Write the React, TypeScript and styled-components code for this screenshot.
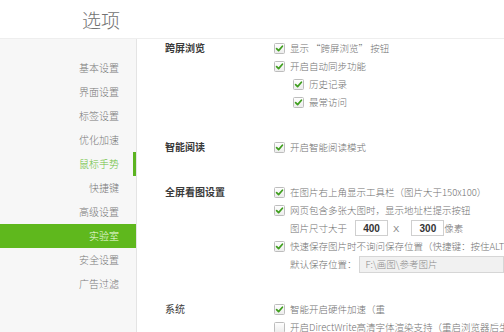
import React from "react";
import styled, { createGlobalStyle } from "styled-components";

const GlobalStyle = createGlobalStyle`
  html, body {
    margin: 0;
    padding: 0;
    background: #ffffff;
    overflow: hidden;
  }
  body {
    font-family: "Noto Sans CJK SC", "Noto Sans", sans-serif;
  }
`;

const menuItems = [
  "基本设置",
  "界面设置",
  "标签设置",
  "优化加速",
  "鼠标手势",
  "快捷键",
  "高级设置",
  "实验室",
  "安全设置",
  "广告过滤",
];

const HOVER_ITEM = "鼠标手势";
const SELECTED_ITEM = "实验室";

const CheckBox = ({ checked = true }: { checked?: boolean }) => (
  <Box width="11" height="11" viewBox="0 0 11 11">
    <defs>
      <linearGradient id="cbg" x1="0" y1="0" x2="0" y2="1">
        <stop offset="0" stopColor="#ffffff" />
        <stop offset="1" stopColor="#ececec" />
      </linearGradient>
    </defs>
    <rect
      x="0.5"
      y="0.5"
      width="10"
      height="10"
      rx="1"
      fill="url(#cbg)"
      stroke="#bdbdbd"
    />
    {checked && (
      <path
        d="M2.6 5.6 L4.6 7.6 L8.4 3.2"
        fill="none"
        stroke="#3f9e1e"
        strokeWidth="1.7"
        strokeLinecap="round"
        strokeLinejoin="round"
      />
    )}
  </Box>
);

const App = () => {
  return (
    <Page>
      <GlobalStyle />
      <Header>
        <TitleCell>
          <Title>选项</Title>
        </TitleCell>
      </Header>
      <Body>
        <Sidebar>
          {menuItems.map((item) => (
            <MenuItem
              key={item}
              $hover={item === HOVER_ITEM}
              $selected={item === SELECTED_ITEM}
            >
              {item}
            </MenuItem>
          ))}
        </Sidebar>
        <Content>
          <Section>
            <SectionLabel>跨屏浏览</SectionLabel>
            <Options>
              <Option>
                <CheckBox />
                <span>显示 “跨屏浏览” 按钮</span>
              </Option>
              <Option>
                <CheckBox />
                <span>开启自动同步功能</span>
              </Option>
              <Option $indent>
                <CheckBox />
                <span>历史记录</span>
              </Option>
              <Option $indent>
                <CheckBox />
                <span>最常访问</span>
              </Option>
            </Options>
          </Section>

          <Section>
            <SectionLabel>智能阅读</SectionLabel>
            <Options>
              <Option>
                <CheckBox />
                <span>开启智能阅读模式</span>
              </Option>
            </Options>
          </Section>

          <Section>
            <SectionLabel>全屏看图设置</SectionLabel>
            <Options>
              <Option>
                <CheckBox />
                <span>在图片右上角显示工具栏（图片大于150x100）</span>
              </Option>
              <Option>
                <CheckBox />
                <span>网页包含多张大图时，显示地址栏提示按钮</span>
              </Option>
              <FieldRow>
                <span>图片尺寸大于</span>
                <SizeInput>400</SizeInput>
                <Times>X</Times>
                <SizeInput>300</SizeInput>
                <span>像素</span>
              </FieldRow>
              <Option>
                <CheckBox />
                <span>快速保存图片时不询问保存位置（快捷键：按住ALT键</span>
              </Option>
              <FieldRow>
                <span>默认保存位置：</span>
                <PathInput>F:\画图\参考图片</PathInput>
              </FieldRow>
            </Options>
          </Section>

          <Section>
            <SectionLabel $light>系统</SectionLabel>
            <Options>
              <Option>
                <CheckBox />
                <span>智能开启硬件加速（重</span>
              </Option>
              <Option>
                <CheckBox checked={false} />
                <span>开启DirectWrite高清字体渲染支持（重启浏览器后生效）</span>
              </Option>
            </Options>
          </Section>
        </Content>
      </Body>
    </Page>
  );
};

export default App;

const Page = styled.div`
  width: 504px;
  height: 332px;
  display: flex;
  flex-direction: column;
  overflow: hidden;
  background: #ffffff;
`;

const Header = styled.div`
  height: 38px;
  flex-shrink: 0;
  display: flex;
  border-bottom: 1px solid #eeeeee;
`;

const TitleCell = styled.div`
  width: 137px;
  box-sizing: border-box;
  padding-right: 17px;
  display: flex;
  align-items: center;
  justify-content: flex-end;
`;

const Title = styled.h1`
  margin: 0;
  font-size: 19px;
  font-weight: 300;
  color: #727272;
  line-height: 1;
`;

const Body = styled.div`
  flex: 1;
  display: flex;
  min-height: 0;
`;

const Sidebar = styled.nav`
  width: 137px;
  flex-shrink: 0;
  box-sizing: border-box;
  padding-top: 17px;
  background: #f7f7f7;
  border-right: 1px solid #e4e4e4;
  display: flex;
  flex-direction: column;
`;

const MenuItem = styled.div<{ $hover?: boolean; $selected?: boolean }>`
  position: relative;
  height: 24px;
  line-height: 24px;
  padding-right: 17px;
  text-align: right;
  font-size: 10px;
  font-weight: 300;
  color: ${({ $hover, $selected }) =>
    $selected ? "#f4ffe6" : $hover ? "#6cbf3c" : "#777777"};
  background: ${({ $selected }) => ($selected ? "#5fb81d" : "transparent")};

  &::after {
    content: "";
    display: ${({ $hover }) => ($hover ? "block" : "none")};
    position: absolute;
    right: 0;
    top: 0;
    width: 3px;
    height: 24px;
    background: #5cb421;
  }
`;

const Content = styled.main`
  flex: 1;
  min-width: 0;
  padding-left: 28px;
  display: flex;
  flex-direction: column;
  gap: 27px;
  font-size: 9.5px;
  font-weight: 300;
  color: #727272;
`;

const Section = styled.section`
  display: flex;
`;

const SectionLabel = styled.div<{ $light?: boolean }>`
  width: 109px;
  flex-shrink: 0;
  height: 18px;
  line-height: 18px;
  font-size: 10px;
  font-weight: ${({ $light }) => ($light ? 400 : 700)};
  color: #3a3a3a;
`;

const Options = styled.div`
  display: flex;
  flex-direction: column;
  min-width: 0;
`;

const Option = styled.div<{ $indent?: boolean }>`
  height: 18px;
  display: flex;
  align-items: center;
  gap: 5px;
  white-space: nowrap;
  margin-left: ${({ $indent }) => ($indent ? "19px" : "0")};
`;

const Box = styled.svg`
  flex-shrink: 0;
  display: block;
`;

const FieldRow = styled.div`
  height: 18px;
  display: flex;
  align-items: center;
  padding-left: 16px;
  white-space: nowrap;
`;

const SizeInput = styled.div`
  width: 33px;
  height: 16px;
  box-sizing: border-box;
  margin-left: 8px;
  border: 1px solid #cfcfcf;
  background: #ffffff;
  font-family: "Liberation Sans", Arial, sans-serif;
  font-size: 10px;
  font-weight: 700;
  color: #333333;
  display: flex;
  align-items: center;
  justify-content: center;
`;

const Times = styled.span`
  margin: 0 4px 0 5px;
  font-family: "Liberation Sans", Arial, sans-serif;
  color: #888888;
`;

const PathInput = styled.div`
  width: 180px;
  height: 17px;
  box-sizing: border-box;
  margin-left: 2px;
  padding-left: 6px;
  border: 1px solid #d6d6d6;
  background: #f1f1f1;
  color: #8a8a8a;
  display: flex;
  align-items: center;
`;
